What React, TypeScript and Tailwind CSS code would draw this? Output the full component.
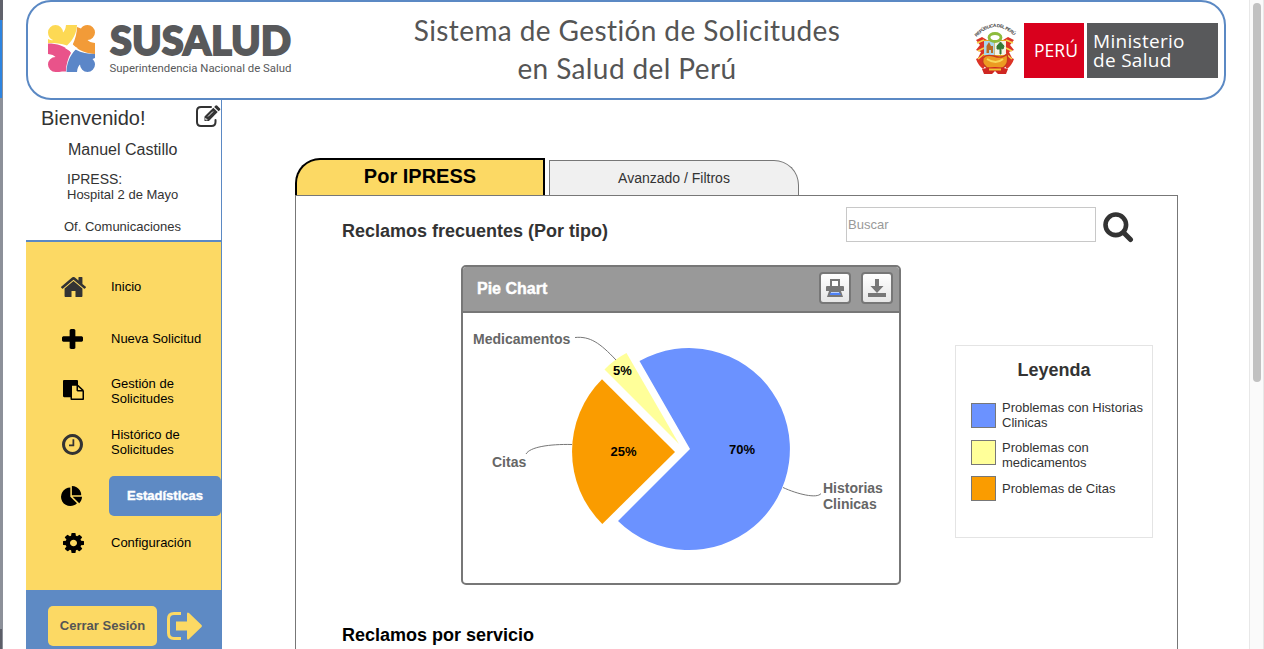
import React from "react";

type Glyph = { d: string; viewBox: string; className: string };

const HOME =
  "M1472 992v480q0 26-19 45t-45 19h-384v-384h-256v384h-384q-26 0-45-19t-19-45v-480q0-1 .5-3t.5-3l575-474 575 474q1 2 1 6zm223-69l-62 74q-8 9-21 11h-3q-13 0-21-7l-692-577-692 577q-12 8-24 7-13-2-21-11l-62-74q-8-10-7-23.5t11-21.5l719-599q32-26 76-26t76 26l244 204v-195q0-14 9-23t23-9h192q14 0 23 9t9 23v408l219 182q10 8 11 21.5t-7 23.5z";
const PLUS =
  "M1600 736v192q0 40-28 68t-68 28h-416v416q0 40-28 68t-68 28h-192q-40 0-68-28t-28-68v-416h-416q-40 0-68-28t-28-68v-192q0-40 28-68t68-28h416v-416q0-40 28-68t68-28h192q40 0 68 28t28 68v416h416q40 0 68 28t28 68z";
const PASTE =
  "M768 1664h896v-640h-416q-40 0-68-28t-28-68v-416h-384v1152zm512-768h299l-299-299v299zm512 128v672q0 40-28 68t-68 28h-960q-40 0-68-28t-28-68v-160h-544q-40 0-68-28t-28-68v-1344q0-40 28-68t68-28h1088q40 0 68 28t28 68v328q21 13 36 28l408 408q28 28 48 76t20 88z";
const CLOCK =
  "M1024 544v448q0 14-9 23t-23 9h-320q-14 0-23-9t-9-23v-64q0-14 9-23t23-9h224v-352q0-14 9-23t23-9h64q14 0 23 9t9 23zm416 352q0-148-73-273t-198-198-273-73-273 73-198 198-73 273 73 273 198 198 273 73 273-73 198-198 73-273zm224 0q0 209-103 385.5t-279.5 279.5-385.5 103-385.5-103-279.5-279.5-103-385.5 103-385.5 279.5-279.5 385.5-103 385.5 103 279.5 279.5 103 385.5z";
const PIE =
  "M768 890l546 546q-106 108-247.5 168t-298.5 60q-209 0-385.5-103t-279.5-279.5-103-385.5 103-385.5 279.5-279.5 385.5-103v762zm187 6h773q0 157-60 298.5t-168 247.5zm709-128h-768v-768q209 0 385.5 103t279.5 279.5 103 385.5z";
const COG =
  "M1152 896q0-106-75-181t-181-75-181 75-75 181 75 181 181 75 181-75 75-181zm512-109v222q0 12-8 23t-20 13l-185 28q-19 54-39 91 35 50 107 138 10 12 10 25t-9 23q-27 37-99 108t-94 71q-12 0-26-9l-138-108q-44 23-91 38-16 136-29 186-7 28-36 28h-222q-14 0-24.5-8.5t-11.5-21.5l-28-184q-49-16-90-37l-141 107q-10 9-25 9-14 0-25-11-126-114-165-168-7-10-7-23 0-12 8-23 15-21 51-66.5t54-70.5q-27-50-41-99l-183-27q-13-2-21-12.5t-8-23.5v-222q0-12 8-23t19-13l186-28q14-46 39-92-40-57-107-138-10-12-10-24 0-10 9-23 26-36 98.5-107.5t94.5-71.5q13 0 26 10l138 107q44-23 91-38 16-136 29-186 7-28 36-28h222q14 0 24.5 8.5t11.5 21.5l28 184q49 16 90 37l142-107q9-9 24-9 13 0 25 10 129 119 165 170 7 8 7 22 0 12-8 23-15 21-51 66.5t-54 70.5q26 50 41 98l183 28q13 2 21 12.5t8 23.5z";

function Icon({ d, viewBox, className }: Glyph) {
  return (
    <svg viewBox={viewBox} preserveAspectRatio="none" className={className} fill="currentColor">
      <path d={d} />
    </svg>
  );
}

function SusaludLogo() {
  return (
    <div className="flex w-[250px] gap-3.5">
      <svg viewBox="0 0 47 47" className="mt-0.5 h-[47px] w-[47px] shrink-0">
        <path fill="#fdd954" d="M0 7.5A7.5 7.5 0 0 1 15 7.5C16.5 6 17.6 4 18 0H29C28.5 8 25.5 14.5 19 20.5C13.5 18.5 7 18 0 18V14C1.5 15 3.5 15.5 5 15C2 14 0 11 0 7.5Z" />
        <path fill="#f29b38" d="M39.5 0A7.5 7.5 0 0 1 39.5 15C41 16.500 43 17.6 47 18V29C39 28.5 31 25.5 24.5 20C27.5 14 29 7 29 2L33 3.5C34 1.5 36.5 0 39.5 0Z" />
        <path fill="#e9538a" d="M0 18.500C9 18.5 17 21 23.5 27C20 33 18 39.5 18 46.5H14C12.5 47 10 47 7.5 47A7.5 7.5 0 0 1 7.5 32C6 30.5 4 29.4 0 29Z" />
        <path fill="#5b86c8" d="M18.5 47C18.5 39 21.5 31 27.5 24.5C33.5 28 40 29 47 29V33L44.5 34C46 35.5 47 37 47 39.5A7.5 7.5 0 0 1 32 39.5C30.5 41 29.4 43 29 47Z" />
        <path fill="#fff" d="M23.5 17Q25 21 30 23.3Q25.5 25 23.7 29Q21.5 25 17 23Q21.500 21.5 23.5 17Z" />
      </svg>
      <svg viewBox="0 0 188 54" className="h-[54px] w-[188px]">
        <text x="1" y="32" textLength="181" lengthAdjust="spacingAndGlyphs" fill="#58595b" stroke="#58595b" strokeWidth="1.8" fontFamily="Lato" fontWeight="900" fontSize="40">
          SUSALUD
        </text>
        <text x="0.5" y="49" textLength="182" lengthAdjust="spacingAndGlyphs" fill="#58595b" fontFamily="Roboto" fontSize="11.5">
          Superintendencia Nacional de Salud
        </text>
      </svg>
    </div>
  );
}

function CoatOfArms() {
  return (
    <svg viewBox="0 0 48 56" className="h-14 w-12">
      <defs>
        <path id="crest-arc" d="M3.5 14Q22 -6 42.5 14" />
      </defs>
      <text fontFamily="Liberation Sans" fontWeight="700" fontSize="4.6" fill="#444">
        <textPath href="#crest-arc" textLength="43">REPÚBLICA DEL PERÚ</textPath>
      </text>
      <path d="M3 17L9 14L14 17V32L4 37L8 29L3 27L7 22Z" fill="#dc3326" />
      <path d="M41 17L35 14L30 17V32L40 37L36 29L41 27L37 22Z" fill="#dc3326" />
      <path d="M3 36Q8 34 9 30L13 42L10 46Q5 42 3 36ZM41 36Q36 34 35 30L31 42L34 46Q39 42 41 36Z" fill="#dc3326" />
      <path d="M4 20L11 17M5 28L11 25M5 36L11 31M40 20L33 17M39 28L33 25M39 36L33 31" stroke="#f6d24a" strokeWidth="1.6" />
      <path d="M11 17H33V34Q33 45 22 47Q11 45 11 34Z" fill="#e8a51f" />
      <rect x="11" y="18" width="10.5" height="14" fill="#a9d6ec" />
      <rect x="22" y="18" width="11" height="14" fill="#f5f3e5" />
      <path d="M13.500 30V23L16 19L18 23H20V30H18V27H16V30Z" fill="#b86b25" />
      <path d="M24 23L27.5 19L31 23L30 26L28 25V31H27V26L24 26Z" fill="#357a36" stroke="#357a36" />
      <path d="M10 35Q13 31 21 33Q29 36 34 31Q37 43 27 46L17 46Q8 43 10 35Z" fill="#ec9b22" stroke="#c9391f" strokeWidth="1.4" />
      <path d="M14 36Q23 42 30 36" stroke="#f8d85a" strokeWidth="2" fill="none" />
      <ellipse cx="22" cy="14.5" rx="6" ry="4" fill="none" stroke="#8dbb3d" strokeWidth="2.8" />
      <path d="M9 46Q22 42 35 46L33 51H25L22 48L19 51H11Z" fill="#cf2722" />
      <path d="M16 46.5H28" stroke="#f1c331" strokeWidth="2" />
    </svg>
  );
}

function Header() {
  return (
    <header className="flex h-[100px] w-[1200px] shrink-0 justify-between rounded-[25px] border-2 border-[#5b89c4] bg-white pl-5">
      <div className="flex w-[340px] pt-[21px]">
        <SusaludLogo />
      </div>
      <h1 className="mr-[18px] whitespace-nowrap pt-[9px] text-center font-['Lato'] text-[28px] leading-[38px] text-[#555]">
        <span className="block tracking-[0.4px]">Sistema de Gestión de Solicitudes</span>
        <span className="block tracking-[0.4px]">en Salud del Perú</span>
      </h1>
      <div className="flex w-[340px] justify-end gap-[3px] pr-1.5 pt-[21px]">
        <CoatOfArms />
        <div className="flex h-[55px] w-[60px] items-center justify-center bg-[#d9001d] pl-1 font-['Open_Sans'] text-[17.5px] text-white">
          <span>PERÚ</span>
        </div>
        <div className="flex h-[55px] w-[131px] flex-col justify-center bg-[#58595b] pl-1.5 font-['Open_Sans'] text-[19px] leading-[19px] tracking-[0.3px] text-white">
          <span>Ministerio</span>
          <span>de Salud</span>
        </div>
      </div>
    </header>
  );
}

function EditIcon() {
  return (
    <svg viewBox="0 0 26 23" className="h-[23px] w-[26px]" fill="none">
      <path d="M16 2H6Q2 2 2 6V17Q2 21 6 21H16.5Q20.500 21 20.5 17V15" stroke="#333" strokeWidth="2" strokeLinecap="round" />
      <path d="M9.5 11.5L18.3 2.7L22.7 7.1L13.9 16H9.5Z" fill="#333" />
      <path d="M19.2 1.9L20.6 .6Q21.4 0 22.3 .8L25 3.400Q25.700 4.200 25 5L23.6 6.3Z" fill="#333" />
      <path d="M13 11.500L18 6.5M10.8 13V14.8H12.5" stroke="#fff" strokeWidth=".9" />
    </svg>
  );
}

function ProfileCard() {
  return (
    <div className="flex h-[142px] flex-col border-b-2 border-[#5b89c4] text-[13px] text-[#333]">
      <div className="flex justify-between pl-[15px] pt-[5px]">
        <span className="text-xl leading-[26px]">Bienvenido!</span>
        <EditIcon />
      </div>
      <span className="pl-[42px] pt-2.5 text-base leading-[18px]">Manuel Castillo</span>
      <span className="pl-[41px] pt-3 text-sm leading-4">IPRESS:</span>
      <span className="pl-[41px] leading-4">Hospital 2 de Mayo</span>
      <span className="pl-[38px] pt-4 leading-4">Of. Comunicaciones</span>
    </div>
  );
}

const MENU = [
  { label: ["Inicio"], d: HOME, viewBox: "90 256 1612 1280", icon: "ml-[35px] mr-[25px] h-5 w-[25px] text-[#333]", row: "h-[50px]", text: "pb-0.5" },
  { label: ["Nueva Solicitud"], d: PLUS, viewBox: "192 128 1408 1408", icon: "ml-9 mr-7 h-5 w-[21px] text-black", row: "h-[54px]", text: "pb-0.5" },
  { label: ["Gestión de", "Solicitudes"], d: PASTE, viewBox: "0 0 1792 1792", icon: "ml-[37px] mr-[27px] mb-0.5 h-5 w-[21px] text-black", row: "h-[50px]", text: "" },
  { label: ["Histórico de", "Solicitudes"], d: CLOCK, viewBox: "128 128 1536 1536", icon: "ml-9 mr-7 mt-1 h-[21px] w-[21px] text-[#333]", row: "h-[53px]", text: "pb-0.5" },
  { label: ["Estadísticas"], d: PIE, viewBox: "0 0 1728 1664", icon: "ml-[35px] mr-[27px] h-5 w-[21px] text-black", row: "h-[53px]", text: "", active: true },
  { label: ["Configuración"], d: COG, viewBox: "128 128 1536 1536", icon: "ml-[37px] mr-[27px] mt-0.5 h-5 w-[21px] text-black", row: "h-10", text: "" },
];

function Sidebar() {
  return (
    <aside className="flex w-[196px] shrink-0 flex-col border-r border-[#5b89c4]">
      <ProfileCard />
      <nav className="flex h-[348px] shrink-0 flex-col bg-[#fcd964] pt-5 text-[13px] leading-[15px] text-black">
        {MENU.map((m) => (
          <a key={m.label.join(" ")} className={"flex shrink-0 items-center " + m.row}>
            <Icon d={m.d} viewBox={m.viewBox} className={"shrink-0 " + m.icon} />
            {m.active ? (
              <span className="flex h-10 w-28 shrink-0 items-center justify-center rounded-[5px] bg-[#5e8ac4] font-bold text-white [-webkit-text-stroke:0.4px_white]">
                {m.label[0]}
              </span>
            ) : (
              <span className={"flex flex-col whitespace-nowrap " + m.text}>
                {m.label.map((l) => (
                  <span key={l}>{l}</span>
                ))}
              </span>
            )}
          </a>
        ))}
      </nav>
      <div className="flex flex-1 gap-[9px] bg-[#5e8ac4] pl-[22px] pt-4">
        <button className="h-10 w-[109px] rounded-[5px] bg-[#fcd964] text-[13px] font-bold text-[#555]">Cerrar Sesión</button>
        <svg viewBox="0 0 37 30" className="mt-[5px] h-[30px] w-[37px]">
          <path d="M15 2.5H8Q2.5 2.5 2.5 8V22Q2.5 27.5 8 27.5H15" fill="none" stroke="#fcd964" strokeWidth="3" />
          <path d="M10 10.5H21V3Q21 .5 23 2L35.5 14Q36.5 15 35.5 16L23 28Q21 29.5 21 27V19.5H10Z" fill="#fcd964" />
        </svg>
      </div>
    </aside>
  );
}

function PieChartPanel() {
  return (
    <section className="flex h-80 w-[440px] flex-col overflow-hidden rounded-[5px] border-2 border-[#777] bg-white">
      <div className="flex h-[46px] shrink-0 items-center gap-2.5 border-b-2 border-[#777] bg-[#999] pb-0.5 pl-3.5 pr-1.5">
        <h3 className="flex-1 pt-0.5 text-base font-bold text-white [-webkit-text-stroke:0.4px_white]">Pie Chart</h3>
        <button className="flex h-8 w-8 items-center justify-center rounded-[4px] border-2 border-[#777] bg-linear-to-b from-white to-[#e6e6e6]">
          <svg viewBox="0 0 18 18" className="h-[18px] w-[18px]">
            <path d="M5 8V1H13V8" fill="#fff" stroke="#777" strokeWidth="2" />
            <path d="M0 8Q0 7 1 7H17Q18 7 18 8V12H0Z" fill="#777" />
            <path d="M3 12H15L17 18H1Z" fill="#777" />
            <path d="M5 13H13L15 16H3.500Z" fill="#4f82f7" />
            <path d="M5 13.500H13" stroke="#b9d2ff" />
          </svg>
        </button>
        <button className="flex h-8 w-8 items-center justify-center rounded-[4px] border-2 border-[#777] bg-linear-to-b from-white to-[#e6e6e6]">
          <svg viewBox="0 0 18 18" className="h-[18px] w-[18px]" fill="#777">
            <path d="M7 0H11V7H15.5L9 14L2.5 7H7ZM0 14H18V18H0Z" />
          </svg>
        </button>
      </div>
      <svg viewBox="463 313 436 270" className="h-[270px] w-[436px]" fontFamily="Liberation Sans" fontWeight="700">
        <path d="M690 449L639.5 361A101 101 0 1 1 618 521Z" fill="#6b92ff" />
        <path d="M679 444L604.5 369.5Q614 359.5 626.5 353Z" fill="#ffff99" />
        <path d="M675 452L602 379.3A102 102 0 0 0 602.3 524Z" fill="#fa9c00" />
        <g fill="none" stroke="#777">
          <path d="M575 337.5C590 336 600 343 616 360" />
          <path d="M526 454C530 447 549 444 572 444.5" />
          <path d="M783 487.5C797 494 817 499 821 493.5" />
        </g>
        <g fill="#666" fontSize="14">
          <text x="473" y="344">Medicamentos</text>
          <text x="492" y="467">Citas</text>
          <text x="823" y="493">Historias</text>
          <text x="823" y="509">Clinicas</text>
        </g>
        <g fill="#000" fontSize="13" textAnchor="middle">
          <text x="622.5" y="375">5%</text>
          <text x="623.5" y="456">25%</text>
          <text x="742" y="454">70%</text>
        </g>
      </svg>
    </section>
  );
}

function Legend() {
  return (
    <section className="mt-20 h-[193px] w-[198px] border border-[#e4e4e4] pl-[15px] text-[13px] leading-[15px] text-[#333]">
      <h3 className="pr-[15px] pt-3 text-center text-lg font-bold leading-6">Leyenda</h3>
      <div className="flex pt-[18px]">
        <span className="mt-[3px] h-[25px] w-[25px] shrink-0 border border-[#777] bg-[#6b92ff]" />
        <span className="whitespace-nowrap pl-1.5">Problemas con Historias<br />Clinicas</span>
      </div>
      <div className="flex pt-2.5">
        <span className="h-[25px] w-[25px] shrink-0 border border-[#777] bg-[#ffff99]" />
        <span className="whitespace-nowrap pl-1.5">Problemas con<br />medicamentos</span>
      </div>
      <div className="flex items-center pt-1.5">
        <span className="h-[25px] w-[25px] shrink-0 border border-[#777] bg-[#fa9c00]" />
        <span className="whitespace-nowrap pl-1.5">Problemas de Citas</span>
      </div>
    </section>
  );
}

function Content() {
  return (
    <main className="flex w-[883px] flex-col pt-[58px]">
      <div className="flex h-[37px] shrink-0 items-end gap-1">
        <div className="flex h-[37px] w-[250px] justify-center rounded-tl-[25px] border-2 border-b-0 border-black bg-[#fcd964] pt-1 text-xl font-bold leading-6 text-black">
          Por IPRESS
        </div>
        <div className="flex h-[35px] w-[250px] items-center justify-center rounded-tr-[25px] border border-b-0 border-[#777] bg-[#f0f0f0] text-sm text-[#333]">
          Avanzado / Filtros
        </div>
      </div>
      <div className="flex flex-1 flex-col border border-b-0 border-[#777] pl-[46px] pr-6">
        <div className="flex h-[69px] shrink-0 pr-[19px]">
          <h2 className="flex-1 pt-[23px] text-lg font-bold leading-6 text-[#333]">Reclamos frecuentes (Por tipo)</h2>
          <input
            placeholder="Buscar"
            className="mt-[11px] h-[35px] w-[250px] border border-[#c8c8c8] px-px text-[13px] placeholder:text-[#999]"
          />
          <svg viewBox="0 0 31 31" className="ml-[7px] mt-4 h-[31px] w-[31px]" fill="none" stroke="#333">
            <circle cx="12.8" cy="12.8" r="10.3" strokeWidth="4.6" />
            <path d="M20.5 20.5L27.5 27.5" strokeWidth="5" strokeLinecap="round" />
          </svg>
        </div>
        <div className="flex h-80 shrink-0 justify-between pl-[119px]">
          <PieChartPanel />
          <Legend />
        </div>
        <h2 className="pt-[38px] text-lg font-bold leading-6 text-black">Reclamos por servicio</h2>
      </div>
    </main>
  );
}

export default function App() {
  return (
    <div className="flex h-[649px] w-[1264px] overflow-hidden bg-white font-['Liberation_Sans',sans-serif]">
      <div className="flex w-[3px] shrink-0 flex-col bg-[#8c9099]">
        <div className="h-5 bg-[#60626c]" />
        <div className="h-[78px] w-0.5 bg-[#2d84e0]" />
        <div className="flex-1" />
        <div className="h-5 w-0.5 bg-[#5c5e68]" />
      </div>
      <div className="flex w-[1246px] shrink-0 flex-col pl-[23px]">
        <Header />
        <div className="flex flex-1 gap-[73px]">
          <Sidebar />
          <Content />
        </div>
      </div>
      <div className="flex flex-1 justify-center border-x border-[#e8e8e8] bg-[#fafafa] pt-[3px]">
        <div className="h-[379px] w-2 rounded-full bg-[#c1c1c1]" />
      </div>
    </div>
  );
}
